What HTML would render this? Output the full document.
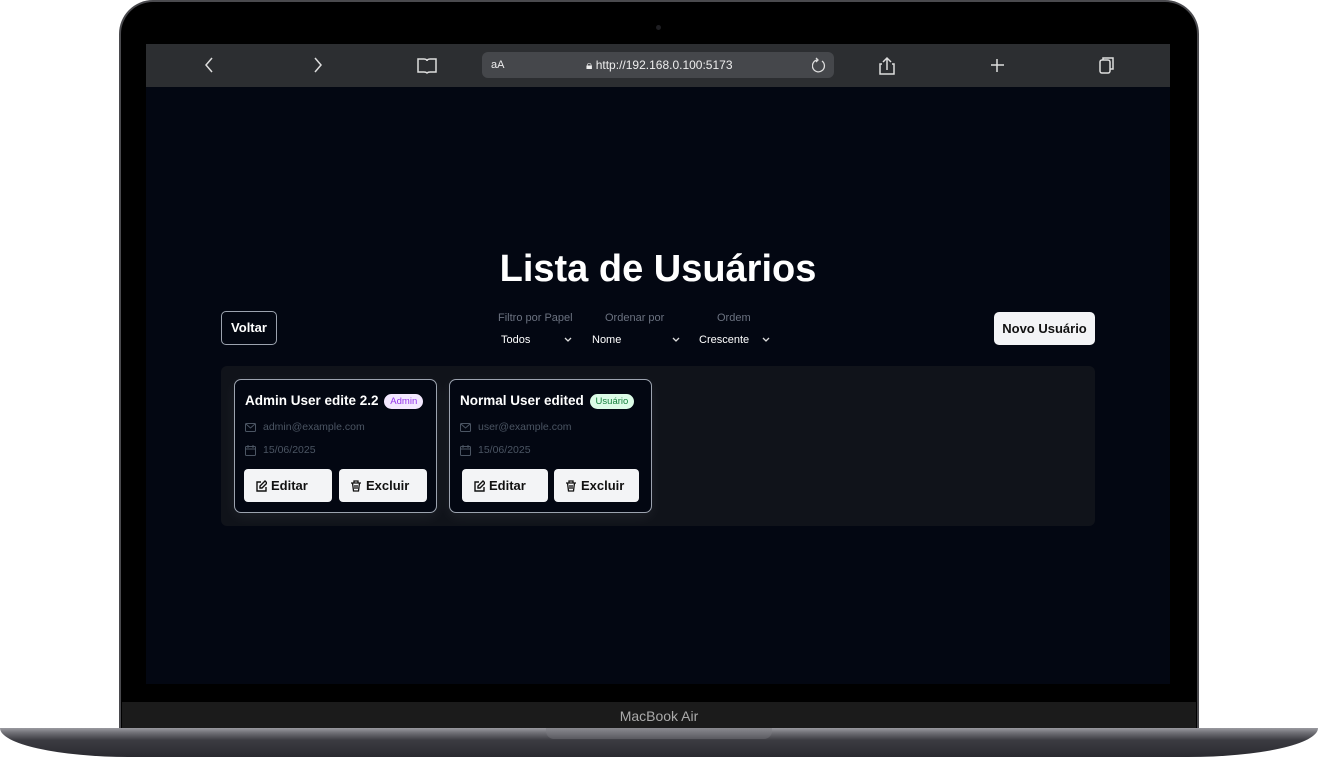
<!DOCTYPE html>
<html><head><meta charset="utf-8"><style>
*{margin:0;padding:0;box-sizing:border-box}
body{width:1318px;height:757px;background:#fff;position:relative;overflow:hidden;font-family:"Liberation Sans",sans-serif}
.lid{position:absolute;left:119px;top:0;width:1080px;height:732px;background:#000;border:2px solid #4a4a4e;border-bottom:none;border-radius:34px 34px 0 0}
.cam{position:absolute;left:656px;top:25px;width:5px;height:5px;border-radius:50%;background:#1e1e22}
.screen{position:absolute;left:146px;top:44px;width:1024px;height:640px;background:#030712;overflow:hidden}
.bar{position:absolute;left:0;top:0;width:1024px;height:43px;background:#2c2e31;color:#ddd}
.url{position:absolute;left:336px;top:8px;width:352px;height:26px;background:#45474b;border-radius:6px;font-size:12px;color:#eee}
.chin{position:absolute;left:122px;top:702px;width:1074px;height:28px;background:#1b1b1b;color:#aaa;font-size:14px;text-align:center;line-height:28px}
.base{position:absolute;left:0;top:728px;width:1318px;height:29px;background:linear-gradient(#9a9aa0 0,#6e6e74 5px,#3c3c42 12px,#2a2a30);border-radius:0 0 130px 130px/0 0 29px 29px}
.notch{position:absolute;left:546px;top:728px;width:226px;height:11px;background:linear-gradient(#8a8a90,#5a5a60);border-radius:0 0 8px 8px}
h1{position:absolute;left:0;width:1024px;top:204px;text-align:center;color:#fff;font-size:38px;font-weight:bold}
.btn{position:absolute;font-size:13px;font-weight:bold;border-radius:5px;text-align:center}
.lbl{position:absolute;font-size:11px;color:#6b7280}
.sel{position:absolute;font-size:11px;color:#fff}
.chev{position:absolute}
.panel{position:absolute;left:75px;top:322px;width:874px;height:160px;background:#10131a;border-radius:6px}
.card{position:absolute;top:335px;width:203px;height:134px;border:1px solid #9ca3af;border-radius:7px;background:#030712;box-shadow:0 4px 14px rgba(255,255,255,.06)}
.card .t{position:absolute;left:10px;top:13px;color:#fff;font-weight:bold;font-size:13.5px}
.badge{display:inline-block;font-size:9.5px;font-weight:normal;padding:2px 6px;border-radius:9px;vertical-align:1px;margin-left:2px}
.card .m{position:absolute;left:10px;font-size:10.5px;color:#4b5563;display:flex;align-items:center;gap:7px}
.cb{position:absolute;top:89px;height:33px;background:#f3f4f6;border-radius:4px;font-size:13px;font-weight:bold;color:#111;line-height:33px;padding-left:11px;display:flex;align-items:center;gap:4px}
</style></head><body>
<div class="lid"></div>
<div class="cam"></div>
<div class="screen">
 <div class="bar">
  <svg width="1024" height="43" style="position:absolute;left:0;top:0" fill="none" stroke="#ddd" stroke-width="1.5">
   <path d="M66 14l-6 7 6 7"/><path d="M169 14l6 7-6 7"/>
   <path d="M272 15h6c2 0 3 1 3 2 0-1 1-2 3-2h6v13h-6c-2 0-3 1-3 1 0 0-1-1-3-1h-6z"/>
   <path d="M741 14v12M737 18l4-4 4 4M736 20h-2v10h14v-10h-2"/>
   <path d="M851 15v13M845 21h13"/>
   <rect x="954" y="16" width="10" height="13" rx="2"/><path d="M957 16v-2h10v11h-3"/>
  </svg>
  <div class="url"><span style="position:absolute;left:9px;top:7px;font-size:11px">aA</span>
   <span style="position:absolute;left:104px;top:6px">🔒︎ http://192.168.0.100:5173</span>
   <svg style="position:absolute;right:8px;top:5px" width="14" height="16" fill="none" stroke="#ddd" stroke-width="1.3"><path d="M10 4a6 6 0 1 1-5-1"/><path d="M4 1l2 2-2 2"/></svg></div>
 </div>
 <h1>Lista de Usuários</h1>
 <div class="btn" style="left:75px;top:267px;width:56px;height:34px;border:1px solid #9ca3af;color:#fff;line-height:32px">Voltar</div>
 <div class="lbl" style="left:352px;top:268px">Filtro por Papel</div>
 <div class="lbl" style="left:459px;top:268px">Ordenar por</div>
 <div class="lbl" style="left:571px;top:268px">Ordem</div>
 <div class="sel" style="left:355px;top:290px">Todos</div>
 <div class="sel" style="left:446px;top:290px">Nome</div>
 <div class="sel" style="left:553px;top:290px">Crescente</div>
 <svg class="chev" style="left:0;top:0" width="1024" height="320" fill="none" stroke="#ddd" stroke-width="1.3"><path d="M419 294l3 3 3-3M527 294l3 3 3-3M617 294l3 3 3-3"/></svg>
 <div class="btn" style="left:848px;top:268px;width:101px;height:33px;background:#f3f4f6;color:#111;line-height:33px">Novo Usuário</div>
 <div class="panel"></div>
 <div class="card" style="left:88px">
  <div class="t">Admin User edite 2.2 <span class="badge" style="background:#f3e8ff;color:#9333ea">Admin</span></div>
  <div class="m" style="top:41px"><svg width="11" height="9" fill="none" stroke="#4b5563"><rect x=".5" y=".5" width="10" height="8" rx="1"/><path d="M1 1l4.5 4 4.5-4"/></svg>admin@example.com</div>
  <div class="m" style="top:64px"><svg width="11" height="11" fill="none" stroke="#4b5563"><rect x=".5" y="1.5" width="10" height="9" rx="1"/><path d="M1 4h9M3 0v3M8 0v3"/></svg>15/06/2025</div>
  <div class="cb" style="left:9px;width:88px"><svg width="12" height="12" fill="none" stroke="#111" stroke-width="1.4"><path d="M6 2H2v9h9V7"/><path d="M10 1l2 2-5 5H5V6z"/></svg>Editar</div>
  <div class="cb" style="left:104px;width:88px"><svg width="12" height="12" fill="none" stroke="#111" stroke-width="1.3"><path d="M1 3h10M4 3V1h4v2M2.5 3l1 8h5l1-8M5 5v4M7 5v4"/></svg>Excluir</div>
 </div>
 <div class="card" style="left:303px">
  <div class="t">Normal User edited <span class="badge" style="background:#dcfce7;color:#15803d">Usuário</span></div>
  <div class="m" style="top:41px"><svg width="11" height="9" fill="none" stroke="#4b5563"><rect x=".5" y=".5" width="10" height="8" rx="1"/><path d="M1 1l4.5 4 4.5-4"/></svg>user@example.com</div>
  <div class="m" style="top:64px"><svg width="11" height="11" fill="none" stroke="#4b5563"><rect x=".5" y="1.5" width="10" height="9" rx="1"/><path d="M1 4h9M3 0v3M8 0v3"/></svg>15/06/2025</div>
  <div class="cb" style="left:12px;width:86px"><svg width="12" height="12" fill="none" stroke="#111" stroke-width="1.4"><path d="M6 2H2v9h9V7"/><path d="M10 1l2 2-5 5H5V6z"/></svg>Editar</div>
  <div class="cb" style="left:104px;width:85px"><svg width="12" height="12" fill="none" stroke="#111" stroke-width="1.3"><path d="M1 3h10M4 3V1h4v2M2.5 3l1 8h5l1-8M5 5v4M7 5v4"/></svg>Excluir</div>
 </div>
</div>
<div class="chin">MacBook Air</div>
<div class="base"></div>
<div class="notch"></div>
</body></html>
